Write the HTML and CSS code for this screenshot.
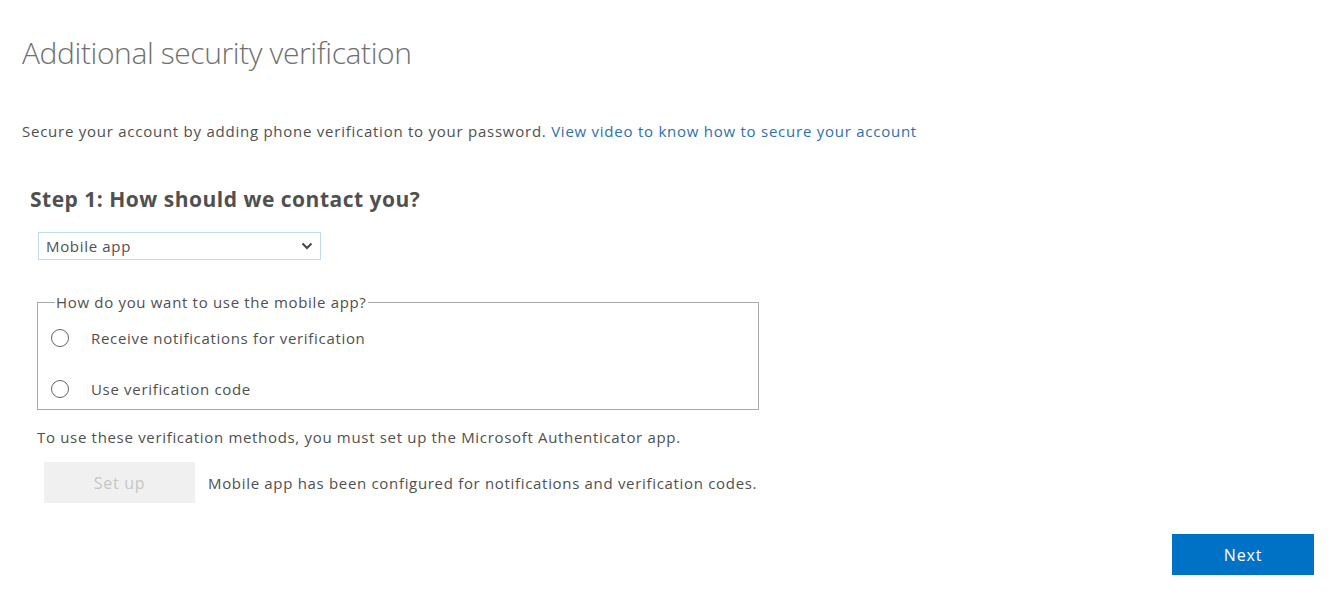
FILE: index.html
```html
<!DOCTYPE html>
<html lang="en">
<head>
<meta charset="utf-8">
<title>Additional security verification</title>
<link rel="stylesheet" href="styles.css">
</head>
<body>
<main class="page">
  <h1 class="title">Additional security verification</h1>
  <p class="intro">Secure your account by adding phone verification to your password. <a class="link" href="#">View video to know how to secure your account</a></p>
  <section class="step">
    <h2 class="step-title">Step 1: How should we contact you?</h2>
    <div class="select">
      <span class="select-value">Mobile app</span>
      <svg class="chev" width="12" height="8" viewBox="0 0 12 8"><path d="M1.5 1.5 L6 6 L10.5 1.5" fill="none" stroke="#444" stroke-width="2"/></svg>
    </div>
    <fieldset class="modes">
      <legend class="legend">How do you want to use the mobile app?</legend>
      <label class="option"><span class="radio"></span><span>Receive notifications for verification</span></label>
      <label class="option"><span class="radio"></span><span>Use verification code</span></label>
    </fieldset>
    <p class="note">To use these verification methods, you must set up the Microsoft Authenticator app.</p>
    <div class="setup-row">
      <button class="btn-setup" disabled>Set up</button>
      <span class="setup-msg">Mobile app has been configured for notifications and verification codes.</span>
    </div>
  </section>
  <div class="actions">
    <button class="btn-next">Next</button>
  </div>
</main>
</body>
</html>
```
FILE: styles.css
```css
* { box-sizing: border-box; }
html, body { margin: 0; padding: 0; background: #fff; }
body {
  font-family: "Open Sans", "Noto Sans", sans-serif;
  color: #505050;
  font-size: 15px;
  letter-spacing: 0.68px;
  line-height: 20px;
}
.page {
  padding: 33px 26px 0 22px;
}
.title {
  margin: 0;
  font-size: 30px;
  font-weight: 300;
  color: #707070;
  line-height: 40px;
  letter-spacing: -0.4px;
}
.intro {
  margin: 48px 0 0 0;
  color: #505050;
  letter-spacing: 0.75px;
}
.link { color: #2f6fad; text-decoration: none; }
.step { padding-left: 8px; }
.step-title {
  margin: 44px 0 0 0;
  font-size: 21px;
  font-weight: 700;
  color: #505050;
  line-height: 28px;
  letter-spacing: 0.5px;
}
.select {
  margin: 19px 0 0 8px;
  width: 283px;
  height: 28px;
  border: 1px solid #c3d9ee;
  display: flex;
  align-items: center;
  justify-content: space-between;
  padding: 0 7px 0 7px;
}
.chev { display: block; }
.modes {
  margin: 32px 0 0 7px;
  width: 722px;
  border: 1px solid #aaa;
  padding: 12px 0 6px 12px;
  min-width: 0;
}
.legend {
  padding: 0 1px;
  margin-left: 5px;
}
.option {
  display: flex;
  align-items: center;
  height: 28px;
  margin-bottom: 23px;
}
.option:last-child { margin-bottom: 0; }
.radio {
  width: 18px;
  height: 18px;
  border: 1.5px solid #666;
  border-radius: 50%;
  margin: 0 22px 0 1px;
  flex: none;
}
.note {
  margin: 17px 0 0 7px;
}
.setup-row {
  display: flex;
  align-items: center;
  margin: 15px 0 0 14px;
}
.btn-setup {
  width: 151px;
  height: 41px;
  border: none;
  background: #f0f0f0;
  color: #c6c6c6;
  font: inherit;
  font-size: 16px;
  letter-spacing: 0.7px;
}
.setup-msg {
  margin-left: 13px;
}
.actions {
  display: flex;
  justify-content: flex-end;
  margin-top: 31px;
}
.btn-next {
  width: 142px;
  height: 41px;
  border: none;
  background: #0072c6;
  color: #fff;
  font: inherit;
  font-size: 16px;
  letter-spacing: 0.8px;
}
```
